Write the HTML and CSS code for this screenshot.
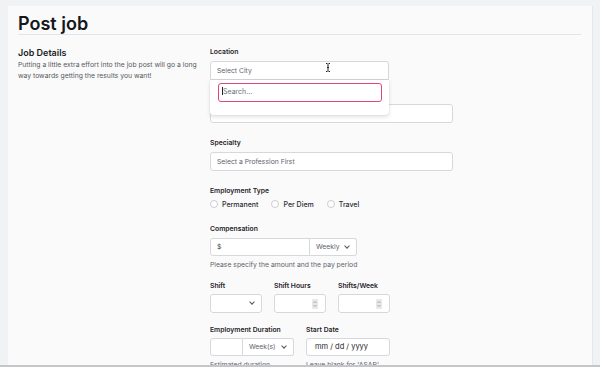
FILE: index.html
```html
<!DOCTYPE html>
<html lang="en">

<head>
    <meta charset="UTF-8" />
    <title>Post job</title>
    <link rel="stylesheet" href="styles.css">
</head>

<body>
    <div class="card">
        <h1 class="page-title">Post job</h1>
        <div class="section">
            <div class="section-info">
                <h2>Job Details</h2>
                <p>Putting a little extra effort into the job post will go a long way towards getting the results you want!</p>
            </div>
            <div class="section-form">
                <div class="field field-location">
                    <label>Location</label>
                    <div class="combo">
                        <div class="input input-half">Select City</div>
                        <div class="dropdown">
                            <div class="search"><span class="caret"></span>Search...</div>
                        </div>
                        <svg class="ibeam" width="6" height="9" viewBox="0 0 6 9">
                            <path d="M1 0.5h1.5M3.5 0.5h1.5M3 1v7M1 8.5h1.5M3.5 8.5h1.5M2 4.5h2" stroke="#222" stroke-width="1" fill="none" />
                        </svg>
                    </div>
                </div>
                <div class="field field-hidden">
                    <span class="label-space"></span>
                    <div class="input"><span class="ghost"></span></div>
                </div>
                <div class="field">
                    <label>Specialty</label>
                    <div class="input">Select a Profession First</div>
                </div>
                <div class="field field-type">
                    <label>Employment Type</label>
                    <div class="radios">
                        <span class="radio"><i></i>Permanent</span>
                        <span class="radio"><i></i>Per Diem</span>
                        <span class="radio"><i></i>Travel</span>
                    </div>
                </div>
                <div class="field field-comp">
                    <label>Compensation</label>
                    <div class="group">
                        <div class="input g-amount">$</div>
                        <div class="input g-select g-weekly">Weekly<span class="chev"></span></div>
                    </div>
                    <p class="help">Please specify the amount and the pay period</p>
                </div>
                <div class="row">
                    <div class="field col">
                        <label>Shift</label>
                        <div class="input small g-select"><span class="chev"></span></div>
                    </div>
                    <div class="field col">
                        <label>Shift Hours</label>
                        <div class="input small">
                            <svg class="spin" width="6" height="10" viewBox="0 0 6 10">
                                <rect width="6" height="10" rx="1" fill="#e6e7e9" />
                                <path d="M1.5 4l1.5-1.5 1.5 1.5M1.5 6l1.5 1.5 1.5-1.5" stroke="#8a8e94" stroke-width="0.7" fill="none" />
                            </svg>
                        </div>
                    </div>
                    <div class="field col">
                        <label>Shifts/Week</label>
                        <div class="input small">
                            <svg class="spin" width="6" height="10" viewBox="0 0 6 10">
                                <rect width="6" height="10" rx="1" fill="#e6e7e9" />
                                <path d="M1.5 4l1.5-1.5 1.5 1.5M1.5 6l1.5 1.5 1.5-1.5" stroke="#8a8e94" stroke-width="0.7" fill="none" />
                            </svg>
                        </div>
                    </div>
                </div>
                <div class="row">
                    <div class="field">
                        <label>Employment Duration</label>
                        <div class="group">
                            <div class="input g-num"></div>
                            <div class="input g-select g-weeks">Week(s)<span class="chev"></span></div>
                        </div>
                        <p class="help">Estimated duration</p>
                    </div>
                    <div class="field">
                        <label>Start Date</label>
                        <div class="input date">mm / dd / yyyy</div>
                        <p class="help">Leave blank for 'ASAP'</p>
                    </div>
                </div>
            </div>
        </div>
    </div>
    <div class="bottom-bar"></div>
</body>

</html>
```

FILE: styles.css
```css
* {
    margin: 0;
    padding: 0;
    box-sizing: border-box;
}

body {
    background: #f1f2f4;
    font-family: Inter, "Noto Sans", sans-serif;
    color: #1f2328;
    overflow: hidden;
    height: 367px;
}

.card {
    margin: 6px 7px 0 8px;
    height: 400px;
    background: #fafafa;
    border-right: 1px solid #e6e7ea;
    padding: 8px 10px 0 10px;
}

.page-title {
    font-size: 18px;
    line-height: 20px;
    font-weight: 600;
    color: #15171a;
    border-bottom: 1px solid #e4e5e8;
    margin-right: 1px;
}

.section {
    display: flex;
    margin-top: 11px;
}

.section-info {
    width: 192px;
    flex: none;
}

.section-info h2 {
    font-size: 9px;
    line-height: 14px;
    font-weight: 600;
    color: #1a1c1f;
}

.section-info p {
    font-size: 6.8px;
    line-height: 10.5px;
    color: #555a61;
}

.section-form {
    flex: 1;
}

.field {
    margin-bottom: 14px;
}

.field label,
.label-space {
    display: block;
    height: 12px;
    font-size: 6.8px;
    line-height: 12px;
    font-weight: 600;
    color: #1f2328;
    margin-bottom: 3px;
}

.input {
    position: relative;
    height: 19px;
    width: 243px;
    border: 1px solid #d6d8dc;
    border-radius: 3px;
    background: #fff;
    font-size: 6.8px;
    line-height: 17px;
    padding: 0 6px;
    color: #5f646b;
}

.input-half {
    width: 179px;
    border-radius: 3px 3px 0 0;
}

.combo {
    position: relative;
}

.dropdown {
    position: absolute;
    left: 0;
    top: 19px;
    width: 179px;
    height: 35px;
    background: #fff;
    border-radius: 0 0 3px 3px;
    box-shadow: 0 2px 4px rgba(0, 0, 0, 0.12), 0 0 1px rgba(0, 0, 0, 0.2);
    padding: 3px 7px 0 8px;
    z-index: 2;
}

.search {
    height: 19px;
    border: 1.5px solid #e0457e;
    border-radius: 3px;
    font-size: 7px;
    line-height: 16px;
    padding-left: 3px;
    color: #6b7078;
}

.caret {
    display: inline-block;
    width: 1px;
    height: 8px;
    background: #222;
    vertical-align: -1px;
}

.ibeam {
    position: absolute;
    left: 115px;
    top: 2px;
}

.field-location {
    margin-bottom: 9px;
}

.ghost {
    display: block;
    width: 60px;
    height: 3px;
    margin-top: 7px;
    background: #ececee;
}

.field-type {
    margin-bottom: 13px;
}

.radios {
    display: flex;
    height: 12px;
    margin-top: -2px;
    align-items: center;
    font-size: 7px;
    font-weight: 500;
    color: #2a2d31;
}

.radio {
    display: flex;
    align-items: center;
    margin-right: 13px;
}

.radio i {
    width: 8px;
    height: 8px;
    border: 1px solid #c9ccd1;
    border-radius: 50%;
    background: #fff;
    margin-right: 4px;
}

.group {
    display: flex;
}

.group .input {
    height: 18px;
    line-height: 16px;
}

.g-amount {
    width: 100px;
    border-radius: 3px 0 0 3px;
    color: #3a3e44;
}

.g-weekly {
    width: 47px;
    border-left: none;
    border-radius: 0 3px 3px 0;
}

.chev {
    position: absolute;
    top: 5px;
    right: 7px;
    width: 4px;
    height: 4px;
    border-right: 1px solid #555;
    border-bottom: 1px solid #555;
    transform: rotate(45deg);
}

.help {
    font-size: 6.8px;
    line-height: 10px;
    color: #5f646b;
    margin-top: 4px;
}

.field-comp {
    margin-bottom: 10px;
}

.row {
    display: flex;
    gap: 12px;
}

.row .field {
    margin-bottom: 11px;
}

.row .field label {
    margin-bottom: 2px;
}

.small {
    width: 52px;
}

.spin {
    position: absolute;
    right: 7px;
    top: 4px;
}

.g-num {
    width: 33px;
    border-radius: 3px 0 0 3px;
}

.g-weeks {
    width: 51px;
    border-left: none;
    border-radius: 0 3px 3px 0;
}

.date {
    width: 84px;
    height: 18px;
    line-height: 16px;
    padding-left: 8px;
    color: #1f2328;
    font-size: 7.5px;
}

.bottom-bar {
    position: fixed;
    left: 0;
    right: 0;
    bottom: 0;
    height: 2px;
    background: #c4c6c9;
}
```
